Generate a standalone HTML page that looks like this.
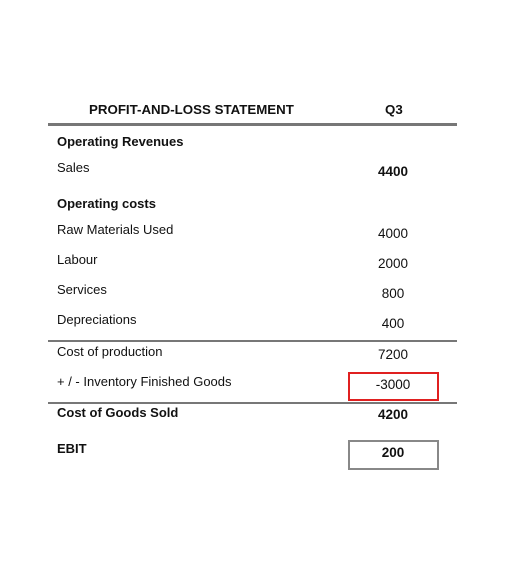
<!DOCTYPE html>
<html><head><style>
body{margin:0;width:510px;height:578px;background:#fff;position:relative;font-family:"Liberation Sans",sans-serif;color:#111;overflow:hidden}
.t{position:absolute;font-size:13px;line-height:16px;white-space:nowrap}
.b{font-weight:bold}
.v{position:absolute;left:348px;width:90px;text-align:center;font-size:13.5px;line-height:16px}
.l{position:absolute;left:48px;width:409px;background:#777}
.box{position:absolute;left:348px;width:87px;height:26px;border:2px solid #888}
</style></head><body>
<div class="t b" style="left:89px;top:102px;font-size:13.3px">PROFIT-AND-LOSS STATEMENT</div>
<div class="t b" style="left:385px;top:102px;font-size:13.3px">Q3</div>
<div class="l" style="top:123px;height:3px"></div>
<div class="t b" style="left:57px;top:134px">Operating Revenues</div>
<div class="t" style="left:57px;top:160px">Sales</div>
<div class="v b" style="top:164px">4400</div>
<div class="t b" style="left:57px;top:196px">Operating costs</div>
<div class="t" style="left:57px;top:222px">Raw Materials Used</div>
<div class="v" style="top:226px">4000</div>
<div class="t" style="left:57px;top:252px">Labour</div>
<div class="v" style="top:256px">2000</div>
<div class="t" style="left:57px;top:282px">Services</div>
<div class="v" style="top:286px">800</div>
<div class="t" style="left:57px;top:312px">Depreciations</div>
<div class="v" style="top:316px">400</div>
<div class="l" style="top:340px;height:2px"></div>
<div class="t" style="left:57px;top:344px">Cost of production</div>
<div class="v" style="top:347px">7200</div>
<div class="t" style="left:57px;top:374px">+ / - Inventory Finished Goods</div>
<div class="box" style="top:372px;height:25px;border-color:#e02020"></div>
<div class="v" style="top:377px">-3000</div>
<div class="l" style="top:402px;height:2px"></div>
<div class="t b" style="left:57px;top:405px">Cost of Goods Sold</div>
<div class="v b" style="top:407px">4200</div>
<div class="t b" style="left:57px;top:441px">EBIT</div>
<div class="box" style="top:440px"></div>
<div class="v b" style="top:445px">200</div>
</body></html>
